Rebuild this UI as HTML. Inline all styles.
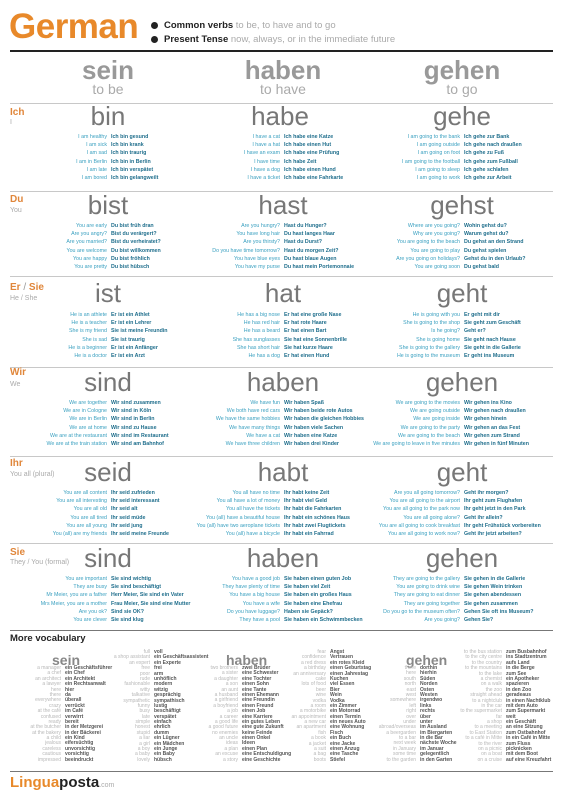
<!DOCTYPE html>
<html><head><meta charset="utf-8"><style>
*{margin:0;padding:0}
body{width:564px;height:796px;background:#fff;position:relative;overflow:hidden;font-family:"Liberation Sans",sans-serif}
.a{position:absolute;white-space:nowrap}
.ln{position:absolute;left:10px;width:543px;height:1px;background:#c8c8c8}
.hd{position:absolute;width:160px;text-align:center;line-height:1}
.vb{position:absolute;width:170px;text-align:center;font-size:26px;color:#777;line-height:1}
.lab{position:absolute;left:10px;font-size:10px;font-weight:bold;color:#e0863a;line-height:1}
.sub{position:absolute;left:10px;font-size:7px;color:#aaa;line-height:1}
.c{position:absolute;width:0;font-size:5.3px;line-height:8.2px}
.c div{position:relative;height:8.2px;white-space:nowrap}
.c i{position:absolute;right:2px;top:0;font-style:normal;color:#3aa0c0}
.c b{margin-left:2px;color:#1f6e8c}
.v{position:absolute;width:0;font-size:5px;line-height:5.4px}
.v div{position:relative;height:5.4px;white-space:nowrap}
.v i{position:absolute;right:2px;top:0;font-style:normal;color:#b8b8b8}
.v b{margin-left:2px;color:#555}
.vh{position:absolute;font-size:14px;font-weight:bold;color:#888;line-height:1}
</style></head><body>

<div class="a" style="left:9px;top:9px;font-size:35px;font-weight:bold;color:#e8892a;line-height:1;letter-spacing:-0.5px">German</div>
<div class="a" style="left:151px;top:22px;width:7px;height:7px;border-radius:50%;background:#222"></div>
<div class="a" style="left:151px;top:36px;width:7px;height:7px;border-radius:50%;background:#222"></div>
<div class="a" style="left:164px;top:20px;font-size:9.5px;line-height:12px"><b style="color:#222">Common verbs</b> <span style="color:#aaa">to be, to have and to go</span></div>
<div class="a" style="left:164px;top:34px;font-size:9.5px;line-height:12px"><b style="color:#222">Present Tense</b> <span style="color:#aaa">now, always, or in the immediate future</span></div>
<div class="a" style="left:10px;top:50px;width:543px;height:2px;background:#222"></div>

<div class="hd" style="left:28px;top:57px;font-size:26px;font-weight:bold;color:#999">sein</div>
<div class="hd" style="left:28px;top:82px;font-size:14px;color:#aaa">to be</div>
<div class="hd" style="left:203px;top:57px;font-size:26px;font-weight:bold;color:#999">haben</div>
<div class="hd" style="left:203px;top:82px;font-size:14px;color:#aaa">to have</div>
<div class="hd" style="left:382px;top:57px;font-size:26px;font-weight:bold;color:#999">gehen</div>
<div class="hd" style="left:382px;top:82px;font-size:14px;color:#aaa">to go</div>

<!-- Ich -->
<div class="ln" style="top:103px"></div>
<div class="lab" style="top:108px">Ich</div><div class="sub" style="top:119px">I</div>
<div class="vb" style="left:23px;top:103px">bin</div>
<div class="vb" style="left:195px;top:103px">habe</div>
<div class="vb" style="left:377px;top:103px">gehe</div>
<div class="c" style="left:109px;top:133px">
<div><i>I am healthy</i><b>Ich bin gesund</b></div><div><i>I am sick</i><b>Ich bin krank</b></div><div><i>I am sad</i><b>Ich bin traurig</b></div><div><i>I am in Berlin</i><b>Ich bin in Berlin</b></div><div><i>I am late</i><b>Ich bin verspätet</b></div><div><i>I am bored</i><b>Ich bin gelangweilt</b></div></div>
<div class="c" style="left:282px;top:133px">
<div><i>I have a cat</i><b>Ich habe eine Katze</b></div><div><i>I have a hat</i><b>Ich habe einen Hut</b></div><div><i>I have an exam</i><b>Ich habe eine Prüfung</b></div><div><i>I have time</i><b>Ich habe Zeit</b></div><div><i>I have a dog</i><b>Ich habe einen Hund</b></div><div><i>I have a ticket</i><b>Ich habe eine Fahrkarte</b></div></div>
<div class="c" style="left:462px;top:133px">
<div><i>I am going to the bank</i><b>Ich gehe zur Bank</b></div><div><i>I am going outside</i><b>Ich gehe nach draußen</b></div><div><i>I am going on foot</i><b>Ich gehe zu Fuß</b></div><div><i>I am going to the football</i><b>Ich gehe zum Fußball</b></div><div><i>I am going to sleep</i><b>Ich gehe schlafen</b></div><div><i>I am going to work</i><b>Ich gehe zur Arbeit</b></div></div>

<!-- Du -->
<div class="ln" style="top:191px"></div>
<div class="lab" style="top:195px">Du</div><div class="sub" style="top:207px">You</div>
<div class="vb" style="left:23px;top:192px">bist</div>
<div class="vb" style="left:198px;top:192px">hast</div>
<div class="vb" style="left:377px;top:192px">gehst</div>
<div class="c" style="left:109px;top:222px">
<div><i>You are early</i><b>Du bist früh dran</b></div><div><i>Are you angry?</i><b>Bist du verärgert?</b></div><div><i>Are you married?</i><b>Bist du verheiratet?</b></div><div><i>You are welcome</i><b>Du bist willkommen</b></div><div><i>You are happy</i><b>Du bist fröhlich</b></div><div><i>You are pretty</i><b>Du bist hübsch</b></div></div>
<div class="c" style="left:282px;top:222px">
<div><i>Are you hungry?</i><b>Hast du Hunger?</b></div><div><i>You have long hair</i><b>Du hast langes Haar</b></div><div><i>Are you thirsty?</i><b>Hast du Durst?</b></div><div><i>Do you have time tomorrow?</i><b>Hast du morgen Zeit?</b></div><div><i>You have blue eyes</i><b>Du hast blaue Augen</b></div><div><i>You have my purse</i><b>Du hast mein Portemonnaie</b></div></div>
<div class="c" style="left:462px;top:222px">
<div><i>Where are you going?</i><b>Wohin gehst du?</b></div><div><i>Why are you going?</i><b>Warum gehst du?</b></div><div><i>You are going to the beach</i><b>Du gehst an den Strand</b></div><div><i>You are going to play</i><b>Du gehst spielen</b></div><div><i>Are you going on holidays?</i><b>Gehst du in den Urlaub?</b></div><div><i>You are going soon</i><b>Du gehst bald</b></div></div>

<!-- Er -->
<div class="ln" style="top:276px"></div>
<div class="lab" style="top:283px">Er <span style="color:#999;font-weight:normal">/</span> Sie</div><div class="sub" style="top:295px">He / She</div>
<div class="vb" style="left:23px;top:280px">ist</div>
<div class="vb" style="left:198px;top:280px">hat</div>
<div class="vb" style="left:377px;top:280px">geht</div>
<div class="c" style="left:109px;top:311px">
<div><i>He is an athlete</i><b>Er ist ein Athlet</b></div><div><i>He is a teacher</i><b>Er ist ein Lehrer</b></div><div><i>She is my friend</i><b>Sie ist meine Freundin</b></div><div><i>She is sad</i><b>Sie ist traurig</b></div><div><i>He is a beginner</i><b>Er ist ein Anfänger</b></div><div><i>He is a doctor</i><b>Er ist ein Arzt</b></div></div>
<div class="c" style="left:282px;top:311px">
<div><i>He has a big nose</i><b>Er hat eine große Nase</b></div><div><i>He has red hair</i><b>Er hat rote Haare</b></div><div><i>He has a beard</i><b>Er hat einen Bart</b></div><div><i>She has sunglasses</i><b>Sie hat eine Sonnenbrille</b></div><div><i>She has short hair</i><b>Sie hat kurze Haare</b></div><div><i>He has a dog</i><b>Er hat einen Hund</b></div></div>
<div class="c" style="left:462px;top:311px">
<div><i>He is going with you</i><b>Er geht mit dir</b></div><div><i>She is going to the shop</i><b>Sie geht zum Geschäft</b></div><div><i>Is he going?</i><b>Geht er?</b></div><div><i>She is going home</i><b>Sie geht nach Hause</b></div><div><i>She is going to the gallery</i><b>Sie geht in die Gallerie</b></div><div><i>He is going to the museum</i><b>Er geht ins Museum</b></div></div>

<!-- Wir -->
<div class="ln" style="top:367px"></div>
<div class="lab" style="top:368px">Wir</div><div class="sub" style="top:381px">We</div>
<div class="vb" style="left:23px;top:369px">sind</div>
<div class="vb" style="left:198px;top:369px">haben</div>
<div class="vb" style="left:377px;top:369px">gehen</div>
<div class="c" style="left:109px;top:399px">
<div><i>We are together</i><b>Wir sind zusammen</b></div><div><i>We are in Cologne</i><b>Wir sind in Köln</b></div><div><i>We are in Berlin</i><b>Wir sind in Berlin</b></div><div><i>We are at home</i><b>Wir sind zu Hause</b></div><div><i>We are at the restaurant</i><b>Wir sind im Restaurant</b></div><div><i>We are at the train station</i><b>Wir sind am Bahnhof</b></div></div>
<div class="c" style="left:282px;top:399px">
<div><i>We have fun</i><b>Wir haben Spaß</b></div><div><i>We both have red cars</i><b>Wir haben beide rote Autos</b></div><div><i>We have the same hobbies</i><b>Wir haben die gleichen Hobbies</b></div><div><i>We have many things</i><b>Wir haben viele Sachen</b></div><div><i>We have a cat</i><b>Wir haben eine Katze</b></div><div><i>We have three children</i><b>Wir haben drei Kinder</b></div></div>
<div class="c" style="left:462px;top:399px">
<div><i>We are going to the movies</i><b>Wir gehen ins Kino</b></div><div><i>We are going outside</i><b>Wir gehen nach draußen</b></div><div><i>We are going inside</i><b>Wir gehen hinein</b></div><div><i>We are going to the party</i><b>Wir gehen an das Fest</b></div><div><i>We are going to the beach</i><b>Wir gehen zum Strand</b></div><div><i>We are going to leave in five minutes</i><b>Wir gehen in fünf Minuten</b></div></div>

<!-- Ihr -->
<div class="ln" style="top:456px"></div>
<div class="lab" style="top:459px">Ihr</div><div class="sub" style="top:471px">You all (plural)</div>
<div class="vb" style="left:23px;top:459px">seid</div>
<div class="vb" style="left:198px;top:459px">habt</div>
<div class="vb" style="left:377px;top:459px">geht</div>
<div class="c" style="left:109px;top:489px">
<div><i>You are all content</i><b>Ihr seid zufrieden</b></div><div><i>You are all interesting</i><b>Ihr seid interessant</b></div><div><i>You are all old</i><b>Ihr seid alt</b></div><div><i>You are all tired</i><b>Ihr seid müde</b></div><div><i>You are all young</i><b>Ihr seid jung</b></div><div><i>You (all) are my friends</i><b>Ihr seid meine Freunde</b></div></div>
<div class="c" style="left:282px;top:489px">
<div><i>You all have no time</i><b>Ihr habt keine Zeit</b></div><div><i>You all have a lot of money</i><b>Ihr habt viel Geld</b></div><div><i>You all have the tickets</i><b>Ihr habt die Fahrkarten</b></div><div><i>You (all) have a beautiful house</i><b>Ihr habt ein schönes Haus</b></div><div><i>You (all) have two aeroplane tickets</i><b>Ihr habt zwei Flugtickets</b></div><div><i>You (all) have a bicycle</i><b>Ihr habt ein Fahrrad</b></div></div>
<div class="c" style="left:462px;top:489px">
<div><i>Are you all going tomorrow?</i><b>Geht ihr morgen?</b></div><div><i>You are all going to the airport</i><b>Ihr geht zum Flughafen</b></div><div><i>You are all going to the park now</i><b>Ihr geht jetzt in den Park</b></div><div><i>You are all going alone?</i><b>Geht ihr allein?</b></div><div><i>You are all going to cook breakfast</i><b>Ihr geht Frühstück vorbereiten</b></div><div><i>You are all going to work now?</i><b>Geht ihr jetzt arbeiten?</b></div></div>

<!-- Sie -->
<div class="ln" style="top:543px"></div>
<div class="lab" style="top:548px">Sie</div><div class="sub" style="top:559px">They / You (formal)</div>
<div class="vb" style="left:23px;top:545px">sind</div>
<div class="vb" style="left:198px;top:545px">haben</div>
<div class="vb" style="left:377px;top:545px">gehen</div>
<div class="c" style="left:109px;top:575px">
<div><i>You are important</i><b>Sie sind wichtig</b></div><div><i>They are busy</i><b>Sie sind beschäftigt</b></div><div><i>Mr Meier, you are a father</i><b>Herr Meier, Sie sind ein Vater</b></div><div><i>Mrs Meier, you are a mother</i><b>Frau Meier, Sie sind eine Mutter</b></div><div><i>Are you ok?</i><b>Sind sie OK?</b></div><div><i>You are clever</i><b>Sie sind klug</b></div></div>
<div class="c" style="left:282px;top:575px">
<div><i>You have a good job</i><b>Sie haben einen guten Job</b></div><div><i>They have plenty of time</i><b>Sie haben viel Zeit</b></div><div><i>You have a big house</i><b>Sie haben ein großes Haus</b></div><div><i>You have a wife</i><b>Sie haben eine Ehefrau</b></div><div><i>Do you have luggage?</i><b>Haben sie Gepäck?</b></div><div><i>They have a pool</i><b>Sie haben ein Schwimmbecken</b></div></div>
<div class="c" style="left:462px;top:575px">
<div><i>They are going to the gallery</i><b>Sie gehen in die Gallerie</b></div><div><i>You are going to drink wine</i><b>Sie gehen Wein trinken</b></div><div><i>They are going to eat dinner</i><b>Sie gehen abendessen</b></div><div><i>They are going together</i><b>Sie gehen zusammen</b></div><div><i>Do you go to the museum often?</i><b>Gehen Sie oft ins Museum?</b></div><div><i>Are you going?</i><b>Gehen Sie?</b></div></div>

<div class="a" style="left:10px;top:630px;width:543px;height:1px;background:#777"></div>
<div class="a" style="left:10px;top:633px;font-size:9.5px;font-weight:bold;color:#222">More vocabulary</div>

<div class="vh" style="left:52px;top:653px">sein</div>
<div class="vh" style="left:226px;top:653px">haben</div>
<div class="vh" style="left:406px;top:653px">gehen</div>

<div class="v" style="left:63px;top:666px">
<div><i>a manager</i><b>ein Geschäftsführer</b></div><div><i>a chef</i><b>ein Chef</b></div><div><i>an architect</i><b>ein Architekt</b></div><div><i>a lawyer</i><b>ein Rechtsanwalt</b></div><div><i>here</i><b>hier</b></div><div><i>there</i><b>da</b></div><div><i>everywhere</i><b>überall</b></div><div><i>crazy</i><b>verrückt</b></div><div><i>at the café</i><b>im Café</b></div><div><i>confused</i><b>verwirrt</b></div><div><i>ready</i><b>bereit</b></div><div><i>at the butcher</i><b>in der Metzgerei</b></div><div><i>at the bakery</i><b>in der Bäckerei</b></div><div><i>a child</i><b>ein Kind</b></div><div><i>jealous</i><b>eifersüchtig</b></div><div><i>careless</i><b>unvorsichtig</b></div><div><i>cautious</i><b>vorsichtig</b></div><div><i>impressed</i><b>beeindruckt</b></div></div>
<div class="v" style="left:152px;top:650px">
<div><i>full</i><b>voll</b></div><div><i>a shop assistant</i><b>ein Geschäftsassistent</b></div><div><i>an expert</i><b>ein Experte</b></div><div><i>free</i><b>frei</b></div><div><i>poor</i><b>arm</b></div><div><i>rude</i><b>unhöflich</b></div><div><i>fashionable</i><b>modern</b></div><div><i>witty</i><b>witzig</b></div><div><i>talkative</i><b>gesprächig</b></div><div><i>sympathetic</i><b>sympathisch</b></div><div><i>funny</i><b>lustig</b></div><div><i>busy</i><b>beschäftigt</b></div><div><i>late</i><b>verspätet</b></div><div><i>simple</i><b>einfach</b></div><div><i>honest</i><b>ehrlich</b></div><div><i>stupid</i><b>dumm</b></div><div><i>a liar</i><b>ein Lügner</b></div><div><i>a girl</i><b>ein Mädchen</b></div><div><i>a boy</i><b>ein Junge</b></div><div><i>a baby</i><b>ein Baby</b></div><div><i>lovely</i><b>hübsch</b></div></div>
<div class="v" style="left:240px;top:666px">
<div><i>two brothers</i><b>zwei Brüder</b></div><div><i>a sister</i><b>eine Schwester</b></div><div><i>a daughter</i><b>eine Tochter</b></div><div><i>a son</i><b>einen Sohn</b></div><div><i>an aunt</i><b>eine Tante</b></div><div><i>a husband</i><b>einen Ehemann</b></div><div><i>a girlfriend</i><b>eine Freundin</b></div><div><i>a boyfriend</i><b>einen Freund</b></div><div><i>a job</i><b>einen Job</b></div><div><i>a career</i><b>eine Karriere</b></div><div><i>a good life</i><b>ein gutes Leben</b></div><div><i>a good future</i><b>eine gute Zukunft</b></div><div><i>no enemies</i><b>keine Feinde</b></div><div><i>an uncle</i><b>einen Onkel</b></div><div><i>ideas</i><b>Ideen</b></div><div><i>a plan</i><b>einen Plan</b></div><div><i>an excuse</i><b>eine Entschuldigung</b></div><div><i>a story</i><b>eine Geschichte</b></div></div>
<div class="v" style="left:328px;top:650px">
<div><i>fear</i><b>Angst</b></div><div><i>confidence</i><b>Vertrauen</b></div><div><i>a red dress</i><b>ein rotes Kleid</b></div><div><i>a birthday</i><b>einen Geburtstag</b></div><div><i>an anniversary</i><b>einen Jahrestag</b></div><div><i>cake</i><b>Kuchen</b></div><div><i>lots of food</i><b>viel Essen</b></div><div><i>beer</i><b>Bier</b></div><div><i>wine</i><b>Wein</b></div><div><i>vodka</i><b>Vodka</b></div><div><i>a room</i><b>ein Zimmer</b></div><div><i>a motorbike</i><b>ein Motorrad</b></div><div><i>an appointment</i><b>einen Termin</b></div><div><i>a new car</i><b>ein neues Auto</b></div><div><i>an apartment</i><b>eine Wohnung</b></div><div><i>fish</i><b>Fisch</b></div><div><i>a book</i><b>ein Buch</b></div><div><i>a jacket</i><b>eine Jacke</b></div><div><i>a suit</i><b>einen Anzug</b></div><div><i>a bag</i><b>eine Tasche</b></div><div><i>boots</i><b>Stiefel</b></div></div>
<div class="v" style="left:418px;top:666px">
<div><i>there</i><b>dorthin</b></div><div><i>here</i><b>hierhin</b></div><div><i>south</i><b>Süden</b></div><div><i>north</i><b>Norden</b></div><div><i>east</i><b>Osten</b></div><div><i>west</i><b>Westen</b></div><div><i>somewhere</i><b>irgendwo</b></div><div><i>left</i><b>links</b></div><div><i>right</i><b>rechts</b></div><div><i>over</i><b>über</b></div><div><i>under</i><b>unter</b></div><div><i>abroad/overseas</i><b>im Ausland</b></div><div><i>a beergarden</i><b>im Biergarten</b></div><div><i>to a bar</i><b>in die Bar</b></div><div><i>next week</i><b>nächste Woche</b></div><div><i>in January</i><b>im Januar</b></div><div><i>some time</i><b>gelegentlich</b></div><div><i>to the garden</i><b>in den Garten</b></div></div>
<div class="v" style="left:504px;top:650px">
<div><i>to the bus station</i><b>zum Busbahnhof</b></div><div><i>to the city centre</i><b>ins Stadtzentrum</b></div><div><i>to the country</i><b>aufs Land</b></div><div><i>to the mountains</i><b>in die Berge</b></div><div><i>to the lake</i><b>zum See</b></div><div><i>a chemist</i><b>ein Apotheker</b></div><div><i>on a walk</i><b>spazieren</b></div><div><i>the zoo</i><b>in den Zoo</b></div><div><i>straight ahead</i><b>geradeaus</b></div><div><i>to a nightclub</i><b>in einen Nachtklub</b></div><div><i>in the car</i><b>mit dem Auto</b></div><div><i>to the supermarket</i><b>zum Supermarkt</b></div><div><i>far</i><b>weit</b></div><div><i>a shop</i><b>ein Geschäft</b></div><div><i>to a meeting</i><b>an eine Sitzung</b></div><div><i>to East Station</i><b>zum Ostbahnhof</b></div><div><i>to a café in Mitte</i><b>in ein Café in Mitte</b></div><div><i>to the river</i><b>zum Fluss</b></div><div><i>on a picnic</i><b>picknicken</b></div><div><i>on a boat</i><b>mit dem Boot</b></div><div><i>on a cruise</i><b>auf eine Kreuzfahrt</b></div></div>

<div class="a" style="left:10px;top:771px;width:543px;height:1px;background:#777"></div>
<div class="a" style="left:10px;top:775px;font-size:15px;font-weight:bold;line-height:1"><span style="color:#e8892a">Lingua</span><span style="color:#222">posta</span><span style="color:#aaa;font-weight:normal;font-size:7px">.com</span></div>
</body></html>
